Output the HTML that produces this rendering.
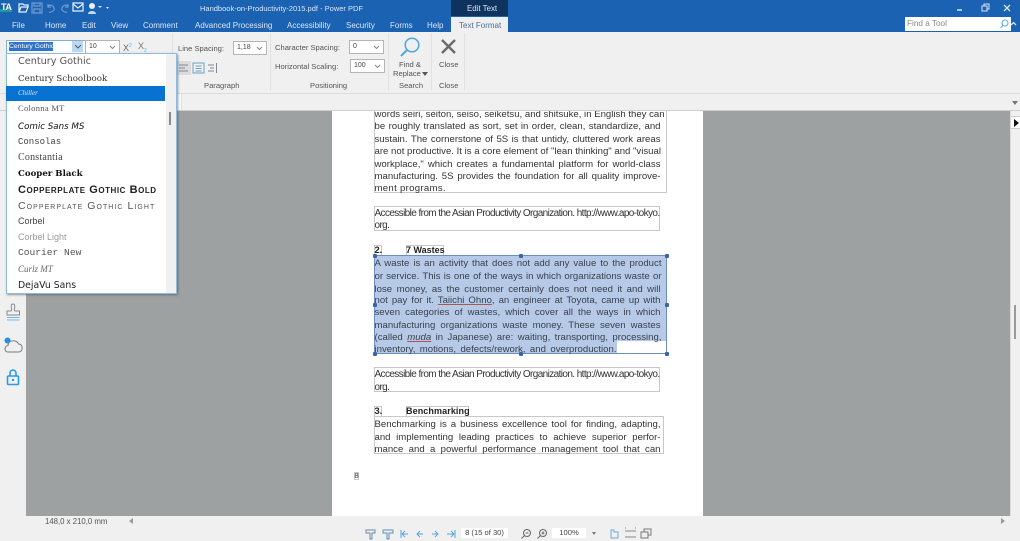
<!DOCTYPE html>
<html><head><meta charset="utf-8"><style>
html,body{margin:0;padding:0;width:1020px;height:541px;overflow:hidden;background:#f0f0f0;font-family:"Liberation Sans",sans-serif}
.a{position:absolute;white-space:nowrap}
.w{color:#dbe7f5;font-size:8px;top:21px}
.g{color:#555;font-size:7.6px}
.sel{position:absolute;background:#fff;border:1px solid #b5b5b5;height:12px;font-size:7px;line-height:12px;color:#444;padding-left:3px;box-sizing:content-box}
.sel svg{position:absolute;right:3px;top:4px}
.l{position:absolute;left:374.5px;width:287px;font-size:9.6px;line-height:12px;height:12px;color:#333;text-align:justify;text-align-last:justify;white-space:nowrap;font-family:"Liberation Sans",sans-serif}
.acc{font-size:10px;letter-spacing:-.61px}
.b{position:absolute;border:1px solid #c8c8c8;box-sizing:border-box}
.h{position:absolute;width:4px;height:4px;background:#3a66a8;border-radius:1px}
.f{position:absolute;left:18px;color:#333;white-space:nowrap;line-height:16px;height:16px}
</style></head><body>
<div class="a" style="left:0;top:0;width:1020px;height:32px;background:#1b62b3"></div>
<div class="a" style="left:451px;top:0;width:57px;height:16px;background:#0e335f"></div>
<div class="a" style="left:451px;top:17px;width:57px;height:15px;background:#f0f0f0"></div>
<div class="a" style="left:0;top:9px;width:12px;height:3px;background:#1d9a9a"></div>
<div class="a" style="left:1px;top:2px;font-size:9px;font-weight:bold;color:#fff;letter-spacing:-.5px">TA</div>
<svg class="a" style="left:14px;top:0" width="100" height="16" fill="none" stroke="#c4d8ef" stroke-width="1.2"><path d="M5 12V4h4l1 1h4v2M5 12l2-5h7l-2 5z" stroke="#e8f0fa"/><path d="M18 3h10v10H18z M20 3v3h6V3 M20 13V9h6v4" stroke="#6f9bd0"/><path d="M34 6c5-3 7 3 6 4s-3 3-5 2M34 4v3h3" stroke="#6f9bd0"/><path d="M54 6c-5-3-7 3-6 4s3 3 5 2M54 4v3h-3" stroke="#6f9bd0"/><path d="M59 3h10v8H59zM59 4l5 4 5-4" stroke="#e8f0fa"/><circle cx="78" cy="6" r="3" fill="#e8f0fa" stroke="none"/><path d="M74 14c0-4 8-4 8 0z" fill="#c4d8ef" stroke="none"/><path d="M84 6h4l-2 2zM92 5h3M92 7h3l-1.500 2z" fill="#dbe7f5" stroke="none"/></svg>
<div class="a" style="left:200px;top:4px;font-size:7.5px;color:#dbe7f5">Handbook-on-Productivity-2015.pdf - Power PDF</div>
<div class="a" style="left:467px;top:4px;font-size:7.9px;color:#dfe7f0">Edit Text</div>
<svg class="a" style="left:950px;top:0" width="70" height="16" stroke="#dbe7f5" fill="none"><path d="M7 10h5" stroke-width="1.500"/><path d="M32 6h5v5h-5zM34 6V4h5v5h-2"/><path d="M54 5l6 6M60 5l-6 6" stroke-width="1.300"/></svg>
<div class="a w" style="left:12px">File</div>
<div class="a w" style="left:45px">Home</div>
<div class="a w" style="left:82px">Edit</div>
<div class="a w" style="left:111px">View</div>
<div class="a w" style="left:143px">Comment</div>
<div class="a w" style="left:195px">Advanced Processing</div>
<div class="a w" style="left:287px">Accessibility</div>
<div class="a w" style="left:346px">Security</div>
<div class="a w" style="left:390px">Forms</div>
<div class="a w" style="left:427px">Help</div>
<div class="a" style="left:459px;top:21px;font-size:8px;color:#4a6f9a">Text Format</div>
<div class="a" style="left:905px;top:17px;width:106px;height:14px;background:#fff"></div>
<div class="a" style="left:907px;top:19px;font-size:8.200px;color:#888">Find a Tool</div>
<svg class="a" style="left:998px;top:18px" width="22" height="12" fill="none" stroke="#5ab1e8" stroke-width="1.100"><circle cx="7" cy="5" r="3"/><path d="M5 7.500L2.500 10"/><path d="M13 7l2.500-2.500L18 7" stroke="#dbe7f5" stroke-width="1.300"/></svg>

<!-- ribbon -->
<div class="a" style="left:172px;top:33px;width:1px;height:58px;background:#e2e2e2"></div>
<div class="a" style="left:270px;top:33px;width:1px;height:58px;background:#e2e2e2"></div>
<div class="a" style="left:388px;top:33px;width:1px;height:58px;background:#e2e2e2"></div>
<div class="a" style="left:431px;top:33px;width:1px;height:58px;background:#e2e2e2"></div>
<div class="a" style="left:464px;top:33px;width:1px;height:58px;background:#e2e2e2"></div>

<div class="a" style="left:6px;top:40px;width:78px;height:12px;background:#fff;border:1px solid #7fb0dc"></div>
<div class="a" style="left:9px;top:42px;width:44px;height:9px;background:#2f74c8;font-size:6.800px;line-height:9px;color:#fff;overflow:hidden">Century Gothic</div>
<div class="a" style="left:72px;top:41px;width:11px;height:11px;background:#bcd8ef"></div>
<svg class="a" style="left:74px;top:44px" width="8" height="5" fill="none" stroke="#44607e"><path d="M1 1l3 3 3-3"/></svg>
<div class="sel" style="left:85px;top:40px;width:30px">10<svg width="7" height="5" fill="none" stroke="#888"><path d="M1 1l2.500 2.500L6 1"/></svg></div>
<div class="a" style="left:123px;top:43px;font-size:9px;color:#666">X<sup style="font-size:5px;color:#5ab1e8">2</sup></div>
<div class="a" style="left:138px;top:41px;font-size:9px;color:#777">X<sub style="font-size:5px;color:#5ab1e8">2</sub></div>
<div class="a g" style="left:178px;top:44px">Line Spacing:</div>
<div class="sel" style="left:233px;top:41px;width:29px">1,18<svg width="7" height="5" fill="none" stroke="#888"><path d="M1 1l2.500 2.500L6 1"/></svg></div>
<div class="a" style="left:176px;top:61px;width:15px;height:14px;background:#dcdcdc"></div>
<svg class="a" style="left:177px;top:62px" width="42" height="12" fill="none" stroke="#7a8a96"><path d="M2 3h9M2 6h6M2 9h9"/><path d="M16 1h11v10H16zM18.500 4h6M18.500 6.500h6M18.500 9h6" stroke="#6da0c4"/><path d="M31 3h6M33 6h4M31 9h6M39.500 1v10" /></svg>
<div class="a g" style="left:204px;top:81px">Paragraph</div>
<div class="a g" style="left:275px;top:43px">Character Spacing:</div>
<div class="a g" style="left:275px;top:62px">Horizontal Scaling:</div>
<div class="sel" style="left:349px;top:40px;width:30px">0<svg width="7" height="5" fill="none" stroke="#888"><path d="M1 1l2.500 2.500L6 1"/></svg></div>
<div class="sel" style="left:350px;top:59px;width:30px">100<svg width="7" height="5" fill="none" stroke="#888"><path d="M1 1l2.500 2.500L6 1"/></svg></div>
<div class="a g" style="left:310px;top:81px">Positioning</div>
<svg class="a" style="left:398px;top:36px" width="24" height="22" fill="none" stroke="#4ea7e0" stroke-width="1.500"><circle cx="14" cy="9" r="6.800"/><path d="M9 14l-6 6" stroke-width="2"/></svg>
<div class="a g" style="left:399px;top:60px">Find &amp;</div>
<div class="a g" style="left:393px;top:69px">Replace</div>
<div class="a" style="left:422px;top:72px;width:0;height:0;border-left:3.500px solid transparent;border-right:3.500px solid transparent;border-top:4px solid #555"></div>
<div class="a g" style="left:399px;top:81px">Search</div>
<svg class="a" style="left:441px;top:39px" width="16" height="16" stroke="#6a6a6a" stroke-width="2.400"><path d="M1 1l13 13M14 1L1 14"/></svg>
<div class="a g" style="left:439px;top:60px">Close</div>
<div class="a g" style="left:439px;top:81px">Close</div>

<!-- work area -->
<div class="a" style="left:26px;top:111px;width:984px;height:405px;background:#9da1a1"></div>
<div class="a" style="left:332px;top:111px;width:371px;height:405px;background:#fff"></div>
<div class="a" style="left:1010px;top:111px;width:1px;height:405px;background:#dcdcdc"></div>
<div class="a" style="left:1011px;top:116px;width:9px;height:13px;background:#fff;border-top:1px solid #ccc;border-bottom:1px solid #ccc;box-sizing:border-box"></div>
<div class="a" style="left:1014px;top:119px;width:0;height:0;border-top:4px solid transparent;border-bottom:4px solid transparent;border-left:5px solid #111"></div>
<div class="a" style="left:1014px;top:305px;width:2px;height:34px;background:#9a9a9a"></div>

<!-- side icons -->
<svg class="a" style="left:3px;top:300px" width="20" height="90" fill="none" stroke="#8a8a8a" stroke-width="1"><path d="M4 15v-4h3.500c1 0 1.500-1 1-2.500C8 6.500 8 4 10 4s2 2.500 1.500 4.500c-.5 1.500 0 2.500 1 2.500H16.500v4z"/><path d="M4 17.500h12.500M4 20h12.500" stroke="#6fb8ea"/><path d="M5 52c-4 0-4-6 0-6.500 0-6 9-6 10.500-1.500 5 0 4.500 8 .5 8z" stroke="#777"/><circle cx="4.500" cy="40.500" r="3" fill="#2a8ee0" stroke="none" /><path d="M7 76v-3a3 3 0 016 0v3" stroke="#2a9be8" stroke-width="1.600"/><rect x="4.500" y="76" width="11" height="8.500" stroke="#2a9be8" stroke-width="1.600" rx="1"/><circle cx="10" cy="80" r="1.200" fill="#2a9be8" stroke="none"/></svg>

<!-- page boxes -->
<div class="b" style="left:374px;top:105px;width:293px;height:88px;border-top:0"></div>
<div class="l" style="top:109px;width:286px">words seiri, seiton, seiso, seiketsu, and shitsuke, in English they can</div>
<div class="l" style="top:121px;width:286px">be roughly translated as sort, set in order, clean, standardize, and</div>
<div class="l" style="top:134px;width:286px">sustain. The cornerstone of 5S is that untidy, cluttered work areas</div>
<div class="l" style="top:146px;width:286px">are not productive. It is a core element of "lean thinking" and "visual</div>
<div class="l" style="top:159px;width:286px">workplace," which creates a fundamental platform for world-class</div>
<div class="l" style="top:171px;width:286px">manufacturing. 5S provides the foundation for all quality improve-</div>
<div class="l" style="top:183px;width:auto;text-align-last:left;letter-spacing:.3px">ment programs.</div>
<div class="a" style="left:0;top:93px;width:1010px;height:18px;background:#f0f0f0"></div>
<div class="a" style="left:1010px;top:93px;width:10px;height:18px;background:#f0f0f0"></div>
<div class="a" style="left:0;top:110px;width:1020px;height:1px;background:#cfcfcf"></div>
<div class="a" style="left:1012px;top:101px;width:0;height:0;border-left:3.500px solid transparent;border-right:3.500px solid transparent;border-top:4px solid #777"></div>
<div class="a" style="left:0;top:93px;width:1020px;height:1px;background:#dcdcdc"></div>
<div class="a" style="left:177px;top:94px;width:5px;height:16px;background:#fbfbfb;border-right:1px solid #ddd;box-sizing:border-box"></div>

<div class="b" style="left:374px;top:206px;width:286px;height:25px"></div>
<div class="l acc" style="top:208px;width:285px">Accessible from the Asian Productivity Organization. http://www.apo-tokyo.</div>
<div class="l acc" style="top:220px;width:auto;text-align-last:left">org.</div>

<div class="b" style="left:374px;top:245px;width:8px;height:11px"></div>
<div class="b" style="left:406px;top:245px;width:38px;height:11px"></div>
<div class="a" style="left:374.500px;top:245px;font-size:9.300px;font-weight:bold;color:#222">2.</div>
<div class="a" style="left:406px;top:245px;font-size:9px;font-weight:bold;color:#222">7 Wastes</div>

<div class="a" style="left:374px;top:256px;width:293px;height:85px;background:#b6c9e7"></div>
<div class="a" style="left:374px;top:341px;width:243px;height:13px;background:#b6c9e7"></div>
<div class="b" style="left:374px;top:255px;width:293px;height:99px;border-color:#6d8dc0"></div>
<div class="l" style="top:258px;width:287px;color:#38424e">A waste is an activity that does not add any value to the product</div>
<div class="l" style="top:271px;width:287px;color:#38424e">or service. This is one of the ways in which organizations waste or</div>
<div class="l" style="top:284px;width:286px;color:#38424e">lose money, as the customer certainly does not need it and will</div>
<div class="l" style="top:295px;width:286px;color:#38424e">not pay for it. <u style="text-decoration-color:#a55">Taiichi Ohno</u>, an engineer at Toyota, came up with</div>
<div class="l" style="top:307px;width:286px;color:#38424e">seven categories of wastes, which cover all the ways in which</div>
<div class="l" style="top:320px;width:286px;color:#38424e">manufacturing organizations waste money. These seven wastes</div>
<div class="l" style="top:332px;width:287px;color:#38424e">(called <i><u style="text-decoration-color:#a55">muda</u></i> in Japanese) are: waiting, transporting, processing,</div>
<div class="l" style="top:344px;width:242px;color:#38424e">inventory, motions, defects/rework, and overproduction.</div>
<div class="h" style="left:372.500px;top:253.500px"></div><div class="h" style="left:518.500px;top:253.500px"></div><div class="h" style="left:665px;top:253.500px"></div>
<div class="h" style="left:372.500px;top:302.500px"></div><div class="h" style="left:665px;top:302.500px"></div>
<div class="h" style="left:372.500px;top:352px"></div><div class="h" style="left:518.500px;top:352px"></div><div class="h" style="left:665px;top:352px"></div>

<div class="b" style="left:374px;top:367px;width:286px;height:25px"></div>
<div class="l acc" style="top:369px;width:285px">Accessible from the Asian Productivity Organization. http://www.apo-tokyo.</div>
<div class="l acc" style="top:382px;width:auto;text-align-last:left">org.</div>

<div class="b" style="left:374px;top:406px;width:8px;height:11px"></div>
<div class="b" style="left:406px;top:406px;width:63px;height:11px"></div>
<div class="a" style="left:374.500px;top:406px;font-size:9.300px;font-weight:bold;color:#222">3.</div>
<div class="a" style="left:406px;top:406px;font-size:9px;font-weight:bold;color:#222;letter-spacing:.1px">Benchmarking</div>

<div class="b" style="left:374px;top:416px;width:290px;height:38px"></div>
<div class="l" style="top:419px;width:286px">Benchmarking is a business excellence tool for finding, adapting,</div>
<div class="l" style="top:432px;width:286px">and implementing leading practices to achieve superior perfor-</div>
<div class="l" style="top:444px;width:286px">mance and a powerful performance management tool that can</div>
<div class="b" style="left:354px;top:472px;width:5px;height:8px"></div>
<div class="a" style="left:354.500px;top:471px;font-size:7.500px;color:#333">8</div>

<!-- bottom -->
<div class="a" style="left:45px;top:517px;font-size:7.800px;color:#555">148,0 x 210,0 mm</div>
<div class="a" style="left:129px;top:518px;width:0;height:0;border-top:3px solid transparent;border-bottom:3px solid transparent;border-right:4px solid #999"></div>
<div class="a" style="left:1001px;top:518px;width:0;height:0;border-top:3px solid transparent;border-bottom:3px solid transparent;border-left:4px solid #999"></div>
<svg class="a" style="left:362px;top:527px" width="300" height="14" fill="none" stroke="#6a8aa8" stroke-width="1"><path d="M4 3h9v3H10v6H8V6H4z"/><path d="M21 3h10v3h-4v6h-2V6h-4z" stroke="#5a8fb8"/><path d="M39 3v8M46 7h-6M43 4l-3 3 3 3M61 7h-6M58 4l-3 3 3 3M70 7h6M73 4l3 3-3 3M85 7h7M89 4l3 3-3 3M93 3v8" stroke="#59a6dc"/><circle cx="165" cy="6" r="3.500" stroke="#666"/><path d="M162.500 8.500l-3 3M163.500 6h3" stroke="#666"/><circle cx="181" cy="6" r="3.500" stroke="#666"/><path d="M178.500 8.500l-3 3M179.500 6h3M181 4.500v3" stroke="#666"/><path d="M252 3h-3v8h7V5h-4z" stroke="#6fa8d6"/><path d="M263 4h11M263 10h11M263 1h1M273 1h1" stroke="#888"/><path d="M279 5h7v6h-7zM282 5V2h7v6h-3" stroke="#777"/></svg>
<div class="a" style="left:461px;top:528px;width:47px;height:10px;background:#fff;font-size:7.600px;line-height:10px;text-align:center;color:#444">8 (15 of 30)</div>
<div class="a" style="left:552px;top:528px;width:34px;height:10px;background:#fff;font-size:7.600px;line-height:10px;text-align:center;color:#444">100%</div>
<div class="a" style="left:592px;top:532px;width:0;height:0;border-left:2.500px solid transparent;border-right:2.500px solid transparent;border-top:3px solid #777"></div>

<!-- dropdown -->
<div class="a" style="left:6px;top:53px;width:171px;height:241px;background:#fff;border:1px solid #8fbbdc;box-sizing:border-box;box-shadow:1px 1px 2px rgba(60,70,80,.55)"></div>
<div class="a" style="left:166px;top:54px;width:10px;height:239px;background:#f0f0f0"></div>
<div class="a" style="left:169px;top:112px;width:2px;height:13px;background:#8a8a8a"></div>
<div class="a" style="left:6px;top:86px;width:159px;height:15px;background:#0872d2"></div>
<div class="f" style="top:54px;color:#555;font-family:'DejaVu Sans',sans-serif;font-size:9.700px">Century Gothic</div>
<div class="f" style="top:71px;font-family:'DejaVu Serif','Liberation Serif',serif;font-size:8.700px;color:#333">Century Schoolbook</div>
<div class="f" style="top:85px;font-size:7px;color:#dbe9f8;font-family:'Liberation Serif',serif;font-style:italic">Chiller</div>
<div class="f" style="top:100px;font-size:8.500px;color:#555;font-family:'Liberation Serif',serif;letter-spacing:.3px">Colonna MT</div>
<div class="f" style="top:119px;color:#111;font-style:italic;font-family:'DejaVu Sans',sans-serif;font-size:8.700px">Comic Sans MS</div>
<div class="f" style="top:134px;font-size:9px;color:#444;font-family:'Liberation Mono',monospace">Consolas</div>
<div class="f" style="top:150px;font-size:10px;color:#444;font-family:'Liberation Serif',serif;letter-spacing:.2px">Constantia</div>
<div class="f" style="top:166px;color:#111;font-weight:bold;font-family:'DejaVu Serif',serif;font-size:8.600px">Cooper Black</div>
<div class="f" style="top:182px;font-size:11px;color:#222;font-weight:bold;font-family:'Liberation Sans',sans-serif;font-variant:small-caps;letter-spacing:.55px">Copperplate Gothic Bold</div>
<div class="f" style="top:198px;font-size:10.500px;color:#555;font-family:'Liberation Sans',sans-serif;font-variant:small-caps;letter-spacing:1.05px">Copperplate Gothic Light</div>
<div class="f" style="top:213px;font-size:9px;color:#444">Corbel</div>
<div class="f" style="top:229px;font-size:9px;color:#999">Corbel Light</div>
<div class="f" style="top:245px;font-size:9.600px;color:#555;font-family:'Liberation Mono',monospace">Courier New</div>
<div class="f" style="top:261px;font-size:9px;color:#666;font-family:'Liberation Serif',serif;font-style:italic">Curlz MT</div>
<div class="f" style="top:278px;font-size:9.300px;color:#222;font-family:'DejaVu Sans',sans-serif">DejaVu Sans</div>
</body></html>
